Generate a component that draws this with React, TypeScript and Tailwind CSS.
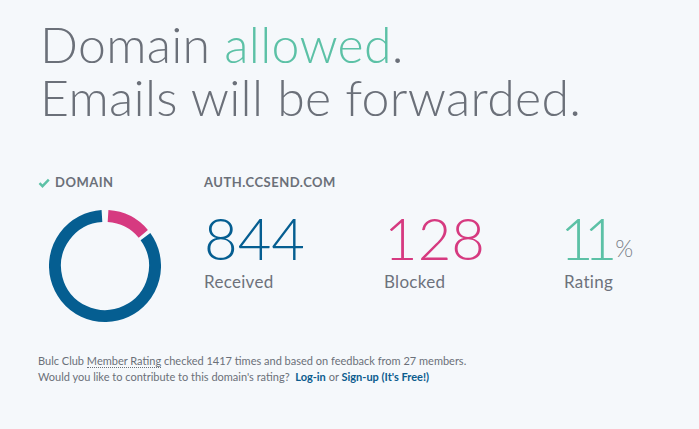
import React from "react";

const font = { fontFamily: "Lato, 'Noto Sans', sans-serif" };

function Donut() {
  // ring: center 56,56 r 50, stroke 12
  const cx = 56, cy = 56, r = 50;
  const pt = (deg: number) => {
    const a = ((deg - 90) * Math.PI) / 180;
    return `${(cx + r * Math.cos(a)).toFixed(2)} ${(cy + r * Math.sin(a)).toFixed(2)}`;
  };
  const arc = (a: number, b: number) =>
    `M ${pt(a)} A ${r} ${r} 0 ${b - a > 180 ? 1 : 0} 1 ${pt(b)}`;
  return (
    <svg width="112" height="112" viewBox="0 0 112 112">
      <path d={arc(3.5, 50)} fill="none" stroke="#d63a80" strokeWidth="12" />
      <path d={arc(54, 356.5)} fill="none" stroke="#055e91" strokeWidth="12" />
    </svg>
  );
}

function Stat({ value, label, color, pct }: { value: string; label: string; color: string; pct?: boolean }) {
  return (
    <div className={pct ? "" : "w-[180px]"}>
      <div className={`flex items-end text-[58px] font-light leading-[56px] ${color}`}>
        <span className={pct ? "-ml-[4px] tracking-[-10px]" : ""}>{value}</span>
        {pct ? <span className="mb-[6px] ml-[8px] text-[23px] leading-none text-[#7a7f87]">%</span> : null}
      </div>
      <div className="mt-[3px] text-[17px] tracking-[0.3px] text-[#6d727b]">{label}</div>
    </div>
  );
}

export default function App() {
  return (
    <div className="min-h-[429px] w-[699px] overflow-hidden bg-[#f5f8fb] pl-[40px] pt-[18px]" style={font}>
      <h1 className="text-[50px] font-light leading-[53px] tracking-[0.3px] text-[#6b7079]">
        Domain <span className="text-[#5cc1a6]">allowed</span>.
        <br />
        Emails will be forwarded.
      </h1>
      <div className="mt-[49px] flex">
        <div className="w-[164px] shrink-0">
          <div className="-ml-[2px] flex items-center text-[13px] font-bold tracking-[0.5px] text-[#6b7079]">
            <svg width="12" height="10" viewBox="0 0 12 10" className="mr-[5px]">
              <path d="M1.5 5.2 L4.5 8.2 L10.8 1.6" fill="none" stroke="#5cc1a6" strokeWidth="2.4" />
            </svg>
            DOMAIN
          </div>
          <div className="ml-[9px] mt-[17px]">
            <Donut />
          </div>
        </div>
        <div>
          <div className="text-[13px] font-bold tracking-[0.5px] text-[#6b7079]">AUTH.CCSEND.COM</div>
          <div className="mt-[17px] flex">
            <Stat value="844" label="Received" color="text-[#055e91]" />
            <Stat value="128" label="Blocked" color="text-[#d63a80]" />
            <Stat value="11" label="Rating" color="text-[#5cc1a6]" pct />
          </div>
        </div>
      </div>
      <div className="-ml-[2px] mt-[31px] text-[11px] leading-[16px] text-[#6b7079]">
        <p>
          Bulc Club{" "}
          <span className="border-b border-dotted border-[#6b7079]">Member Rating</span> checked 1417 times and based on
          feedback from 27 members.
        </p>
        <p>
          Would you like to contribute to this domain's rating?&nbsp; <a className="font-bold text-[#0b5c8e]">Log-in</a> or{" "}
          <a className="font-bold text-[#0b5c8e]">Sign-up (It's Free!)</a>
        </p>
      </div>
    </div>
  );
}
